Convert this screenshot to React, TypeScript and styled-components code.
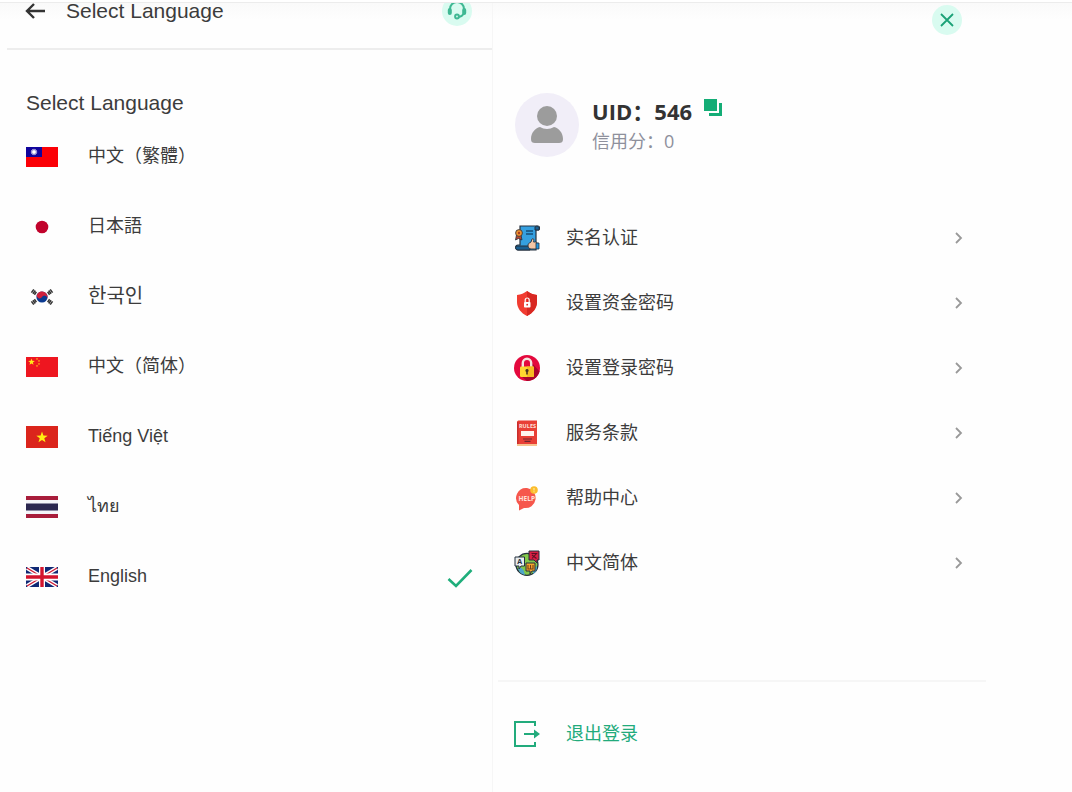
import React from "react";
import styled, { createGlobalStyle } from "styled-components";

const GlobalStyle = createGlobalStyle`
  * { box-sizing: border-box; }
  body {
    margin: 0;
    background: #fefefe;
    color: #3c3c3c;
    font-family: "Liberation Sans", "Noto Sans CJK SC", "Noto Sans CJK KR", sans-serif;
    font-size: 18px;
  }
  button { font: inherit; color: inherit; background: none; border: 0; padding: 0; cursor: pointer; }
  h1, h2, p, ul { margin: 0; padding: 0; font-weight: 400; }
  ul { list-style: none; }
  svg { display: block; flex: none; }
`;

const Page = styled.div`
  position: relative;
  display: flex;
  min-height: 100vh;
`;

const TopEdge = styled.div`
  position: absolute;
  top: 0;
  left: 0;
  right: 0;
  height: 3px;
  background: #fff;
  border-bottom: 1px solid #ececec;
`;

const LanguagePane = styled.section`
  flex: 0 0 46%;
  padding-left: 7px;
  border-right: 1px solid #f6f6f6;
  background: linear-gradient(#f9f9f9, #fefefe 20px);
`;

const ProfilePane = styled.section`
  flex: 1;
  padding: 5px 8% 0 5px;
  background: linear-gradient(#f9f9f9, #fefefe 20px);
`;

const Header = styled.header`
  display: flex;
  align-items: center;
  height: 50px;
  padding: 0 20px 26px 18px;
  border-bottom: 2px solid #ededed;
`;

const BackButton = styled.button`
  width: 24px;
  margin-right: 17px;
`;

const Title = styled.h1`
  flex: 1;
  font-size: 21px;
  line-height: 22px;
`;

const RoundButton = styled.button`
  display: grid;
  place-items: center;
  width: 30px;
  height: 30px;
  border-radius: 50%;
  background: #d9fbf0;
`;

const LanguageBody = styled.div`
  padding: 34px 19px 0 19px;
`;

const Subtitle = styled.h2`
  font-size: 21px;
  line-height: 38px;
`;

const LanguageRow = styled.label`
  display: flex;
  align-items: center;
  gap: 30px;
  height: 70px;
  cursor: pointer;
`;

const HiddenRadio = styled.input`
  position: absolute;
  opacity: 0;
`;

const LanguageName = styled.span`
  flex: 1;
  padding-bottom: 2px;
  line-height: 24px;

  &:lang(ko) {
    font-size: 20px;
  }
`;

const CloseBar = styled.div`
  display: flex;
  justify-content: flex-end;
  padding-right: 24px;
`;

const Profile = styled.div`
  display: flex;
  align-items: center;
  gap: 13px;
  padding: 58px 0 48px 17px;
`;

const Avatar = styled.div`
  display: grid;
  place-items: center;
  width: 64px;
  height: 64px;
  border-radius: 50%;
  background: #f1eef8;
`;

const ProfileText = styled.div`
  padding-top: 2px;
  font-family: "Open Sans", "Noto Sans CJK SC", sans-serif;
`;

const UidLine = styled.div`
  display: flex;
  gap: 12px;
  font-size: 22px;
  font-weight: 700;
  line-height: 30px;
  color: #333;
`;

const Credit = styled.p`
  color: #8e909c;
  line-height: 30px;
`;

const MenuRow = styled.button<{ $accent?: boolean }>`
  display: flex;
  align-items: center;
  gap: 26px;
  width: 100%;
  height: 65px;
  padding: 0 21px 0 16px;
  text-align: left;
  font-family: "Open Sans", "Noto Sans CJK SC", sans-serif;
  color: ${(p) => (p.$accent ? "#22ab7c" : "#3c3c3c")};
`;

const MenuText = styled.span`
  flex: 1;
  padding-bottom: 4px;
`;

const Footer = styled.footer`
  margin-top: 85px;
  padding-top: 19px;
  border-top: 2px solid #f6f6f6;
`;

const star = (cx: number, cy: number, r: number) =>
  Array.from({ length: 10 }, (_, i) => {
    const a = (Math.PI * i) / 5 - Math.PI / 2;
    const d = i % 2 ? r * 0.4 : r;
    return `${cx + d * Math.cos(a)},${cy + d * Math.sin(a)}`;
  }).join(" ");

const rays = Array.from({ length: 12 }, (_, i) => i * 30);

const flags: Record<string, React.ReactNode> = {
  tw: (
    <>
      <path fill="#fb0006" d="M0 1h32v20H0z" />
      <path fill="#10049c" d="M0 1h16v10H0z" />
      {rays.map((a) => (
        <path key={a} fill="#fff" d="M7.300 4 8 2.500 8.700 4z" transform={`rotate(${a} 8 6)`} />
      ))}
      <circle cx="8" cy="6" r="2" fill="#fff" />
    </>
  ),
  jp: <circle cx="16" cy="11" r="6.300" fill="#c1032c" />,
  kr: (
    <>
      <circle cx="16" cy="11" r="5.600" fill="#0b3a90" />
      <path fill="#cf1f3c" d="M11.200 8.100A5.600 5.600 0 0 1 20.800 13.900 2.800 2.800 0 0 0 16 11 2.800 2.800 0 0 1 11.200 8.100z" />
      <g stroke="#333" strokeWidth="1.500">
        <path d="m5.400 6.600 2.400-3.200M6.900 7.700l2.400-3.200M8.400 8.700l2-2.800" />
        <path d="m26.600 6.600-2.400-3.200M25.100 7.700l-2.400-3.200M23.600 8.700l-2-2.800" />
        <path d="m5.400 15.400 2.400 3.200M6.900 14.300l2.400 3.200M8.400 13.300l2 2.800" />
        <path d="m26.600 15.400-2.400 3.200M25.100 14.300l-2.400 3.200M23.600 13.300l-2 2.800" />
      </g>
    </>
  ),
  cn: (
    <>
      <path fill="#ee1620" d="M0 1h32v20H0z" />
      <polygon fill="#ffec18" points={star(5.5, 6, 3.5)} />
      <polygon fill="#ffb515" points={star(11, 3, 1.3)} />
      <polygon fill="#ffb515" points={star(13, 5, 1.3)} />
      <polygon fill="#ffb515" points={star(13, 8, 1.3)} />
      <polygon fill="#ffb515" points={star(11, 10, 1.3)} />
    </>
  ),
  vn: (
    <>
      <path fill="#db251c" d="M0 0h32v22H0z" />
      <polygon fill="#ffef10" points={star(16, 11.5, 6)} />
    </>
  ),
  th: (
    <>
      <path fill="#f4f4f9" d="M0 0h32v22H0z" />
      <path fill="#a81d3b" d="M0 0h32v4H0zM0 18h32v4H0z" />
      <path fill="#2b2750" d="M0 7.500h32v7H0z" />
    </>
  ),
  gb: (
    <>
      <path fill="#102874" d="M0 1h32v20H0z" />
      <path stroke="#fff" strokeWidth="4" d="m1 2 30 18M31 2 1 20" />
      <path stroke="#cf1c35" strokeWidth="1.400" d="m1 2 30 18M31 2 1 20" />
      <path fill="#fff" d="M13 1h6v20h-6zM0 7.600h32v6.800H0z" />
      <path fill="#d3142e" d="M14.300 1h3.400v20h-3.400zM0 9.200h32v3.600H0z" />
    </>
  ),
};

const Flag = ({ code }: { code: string }) => (
  <svg width="32" height="22" viewBox="0 0 32 22" fill="none" aria-hidden="true">
    {flags[code]}
  </svg>
);

const ink = "#25313f";

const icons: Record<string, React.ReactNode> = {
  identity: (
    <>
      <path fill="#35a0e0" stroke={ink} strokeWidth="1.200" d="M6 1h18c2 0 2 4 0 4h-2v20H4c-3 0-3-5 0-5h2z" />
      <path fill="#1a5f91" stroke={ink} d="M21 2c2-2 5 0 4 3h-4zM2 21h14v4H4c-2 0-3-2-2-4z" />
      <path stroke="#164e78" strokeWidth="1.400" d="M12 6h7M12 9h7" />
      <path fill="#b5432f" stroke={ink} strokeWidth=".8" d="m2.500 10-1 5 3-1.500L8 15l-1-5z" />
      <circle cx="5" cy="8" r="3.400" fill="#ef9130" stroke={ink} strokeWidth=".8" />
      <circle cx="5" cy="8" r="1.200" fill="#a63c20" />
      <path fill="#f4c6a5" stroke={ink} strokeWidth=".9" d="M14 20c0-2 2-2 3-3l1-3c2-1 2 1 1.500 3H22c2 0 2 6 0 7h-5c-2 0-3-2-3-4z" />
      <path fill="#2196df" stroke={ink} strokeWidth=".8" d="M22 18h3v6h-3z" />
    </>
  ),
  shield: (
    <>
      <path fill="#f13c31" d="M13 1c3 2.500 6 3.500 10 4v7c0 6-4 11-10 14C7 23 3 18 3 12V5c4-.5 7-1.500 10-4z" />
      <path fill="#d82822" d="M13 1c3 2.500 6 3.500 10 4v7c0 6-4 11-10 14z" />
      <rect x="10" y="12" width="6.500" height="5.500" rx=".8" fill="#fff" />
      <path stroke="#fff" strokeWidth="1.200" d="M11.200 12v-2a2 2 0 0 1 4 0v2" />
      <circle cx="13.200" cy="14.700" r=".9" fill="#d82822" />
    </>
  ),
  lock: (
    <>
      <circle cx="13" cy="13" r="13" fill="#e4083d" />
      <path fill="#a8042c" d="m18 8 7.500 8.500C24 22 19 26 13 26l-6-5z" />
      <path stroke="#f3e5df" strokeWidth="2.400" d="M8.800 13V8a4.200 4.200 0 0 1 8.400 0V13" />
      <rect x="6" y="11.500" width="14" height="10.500" rx="1.200" fill="#ffd630" />
      <path fill="#f7bb22" d="M13 11.500h5.800c.7 0 1.200.5 1.200 1.200v8.100c0 .7-.5 1.200-1.200 1.200H13z" />
      <path fill="#4b3420" d="M13 14a1.600 1.600 0 0 1 .8 3v2.500h-1.600V17a1.600 1.600 0 0 1 .8-3z" />
    </>
  ),
  rules: (
    <>
      <path fill="#f7c28f" d="M3 23h20v3H3z" />
      <path fill="#e83f36" d="M3 2c0-1 1-1.500 2-1.500h18V24H3z" />
      <path fill="#c92e2b" d="M3 2h1.500v22H3z" />
      <text x="13.500" y="8" textAnchor="middle" fill="#ffe1dc" fontSize="5.500" fontWeight="700">RULES</text>
      <path fill="#fff3ee" d="M7 11h13v5H7z" />
      <path stroke="#6d2630" strokeWidth="1.200" d="M9 19h9M10.500 21.300h6" />
    </>
  ),
  help: (
    <>
      <path fill="#f6574c" d="M13 3a10 10 0 1 1-3 20l-5 2.500V20A10 10 0 0 1 13 3z" />
      <circle cx="20" cy="5" r="3.800" fill="#fbbd2d" />
      <path stroke="#fff0b0" strokeWidth="1" d="M20 3v2.500M20 6.300v1" />
      <text x="12.800" y="15.500" textAnchor="middle" fill="#ffe1dc" fontSize="6.500" fontWeight="700">HELP</text>
    </>
  ),
  translate: (
    <>
      <circle cx="13" cy="14.400" r="11" fill="#83c94a" stroke={ink} strokeWidth="1.200" />
      <path fill="#4ea6ca" d="M4 18c3-2 6 1 7 7-4-1-6-3-7-7zM19 22c0-3 2-4 4-6 0 4-1 6-4 8z" />
      <path fill="#e8ecee" stroke={ink} d="M1 7h9.500v9H7l-2 3v-3H1z" />
      <text x="5.700" y="14" textAnchor="middle" fill={ink} fontSize="7" fontWeight="700">A</text>
      <path fill="#d81e43" stroke={ink} d="M15 1h10v9h-2v3l-3-3h-5z" />
      <path stroke="#5b1024" strokeWidth="1.100" d="M17.500 3.500h5l-4.500 5M18 5l4.500 3.500" />
      <path fill="#f6a42c" stroke={ink} d="M12 13h9v8h-3l-2 3v-3h-4z" />
      <path stroke="#75401a" strokeWidth="1.100" d="M14 15v4h5v-4M16.500 15v4" />
    </>
  ),
  logout: (
    <>
      <path stroke="#22ab7c" strokeWidth="2" d="M21 5V1H1v24h20v-4M10 13h11" />
      <path fill="#22ab7c" d="m20 8.500 6 4.500-6 4.500z" />
    </>
  ),
};

const MenuIcon = ({ name }: { name: string }) => (
  <svg width="26" height="26" viewBox="0 0 26 26" fill="none" aria-hidden="true">
    {icons[name]}
  </svg>
);

const languages = [
  { code: "tw", name: "中文（繁體）", lang: "zh-CN" },
  { code: "jp", name: "日本語", lang: "ja" },
  { code: "kr", name: "한국인", lang: "ko" },
  { code: "cn", name: "中文（简体）", lang: "zh-CN" },
  { code: "vn", name: "Tiếng Việt", lang: "vi" },
  { code: "th", name: "ไทย", lang: "th" },
  { code: "gb", name: "English", lang: "en" },
];

const menu = [
  { icon: "identity", label: "实名认证" },
  { icon: "shield", label: "设置资金密码" },
  { icon: "lock", label: "设置登录密码" },
  { icon: "rules", label: "服务条款" },
  { icon: "help", label: "帮助中心" },
  { icon: "translate", label: "中文简体" },
];

export default function App() {
  const [selected, setSelected] = React.useState("gb");
  return (
    <>
      <GlobalStyle />
      <Page>
        <LanguagePane>
          <Header>
            <BackButton aria-label="Back">
              <svg width="22" height="16" viewBox="0 0 22 16" fill="none" stroke="#333" strokeWidth="2.400">
                <path d="M20 8H2M9 1 2 8l7 7" />
              </svg>
            </BackButton>
            <Title>Select Language</Title>
            <RoundButton aria-label="Support">
              <svg width="20" height="20" viewBox="0 0 20 20" fill="none" stroke="#3fb893" strokeWidth="2">
                <path d="M3 9V8a7 7 0 0 1 14 0v1M16.500 12.500c-.8 2-2.500 3.300-4.800 3.500" />
                <rect x="1.800" y="8" width="2" height="5" rx="1" fill="#3fb893" />
                <rect x="16.200" y="8" width="2" height="5" rx="1" fill="#3fb893" />
                <circle cx="10" cy="15.500" r="1.900" />
              </svg>
            </RoundButton>
          </Header>
          <LanguageBody>
            <Subtitle>Select Language</Subtitle>
            {languages.map((l) => (
              <LanguageRow key={l.code}>
                <HiddenRadio
                  type="radio"
                  name="language"
                  checked={selected === l.code}
                  onChange={() => setSelected(l.code)}
                />
                <Flag code={l.code} />
                <LanguageName lang={l.lang}>{l.name}</LanguageName>
                {selected === l.code && (
                  <svg width="26" height="24" viewBox="0 0 26 24" fill="none" stroke="#1fae7b" strokeWidth="2.600">
                    <path d="m1.500 14 7.500 7L24.500 5" />
                  </svg>
                )}
              </LanguageRow>
            ))}
          </LanguageBody>
        </LanguagePane>
        <ProfilePane>
          <CloseBar>
            <RoundButton aria-label="Close">
              <svg width="14" height="14" viewBox="0 0 14 14" fill="none" stroke="#1ba277" strokeWidth="1.800">
                <path d="m1 1 12 12M13 1 1 13" />
              </svg>
            </RoundButton>
          </CloseBar>
          <Profile>
            <Avatar>
              <svg width="32" height="38" viewBox="0 0 32 38" fill="#9c9c9c">
                <circle cx="16" cy="10" r="10" />
                <path d="M9 21c4 2.500 10 2.500 14 0 5 1 9 6 9 12 0 3-1.500 4-4 4H4c-2.500 0-4-1-4-4 0-6 4-11 9-12z" />
              </svg>
            </Avatar>
            <ProfileText>
              <UidLine>
                <span>UID：546</span>
                <button aria-label="Copy UID">
                  <svg width="18" height="30" viewBox="0 0 18 30" fill="#14ad76">
                    <path d="M0 3h13v12H0zM15 7h3v13H5v-3h10z" />
                  </svg>
                </button>
              </UidLine>
              <Credit>信用分：0</Credit>
            </ProfileText>
          </Profile>
          <nav>
            <ul>
              {menu.map((m) => (
                <li key={m.icon}>
                  <MenuRow>
                    <MenuIcon name={m.icon} />
                    <MenuText>{m.label}</MenuText>
                    <svg width="12" height="14" viewBox="0 0 12 14" fill="none" stroke="#999" strokeWidth="1.800">
                      <path d="m3 2 5 5-5 5" />
                    </svg>
                  </MenuRow>
                </li>
              ))}
            </ul>
          </nav>
          <Footer>
            <MenuRow $accent>
              <MenuIcon name="logout" />
              <MenuText>退出登录</MenuText>
            </MenuRow>
          </Footer>
        </ProfilePane>
        <TopEdge />
      </Page>
    </>
  );
}
